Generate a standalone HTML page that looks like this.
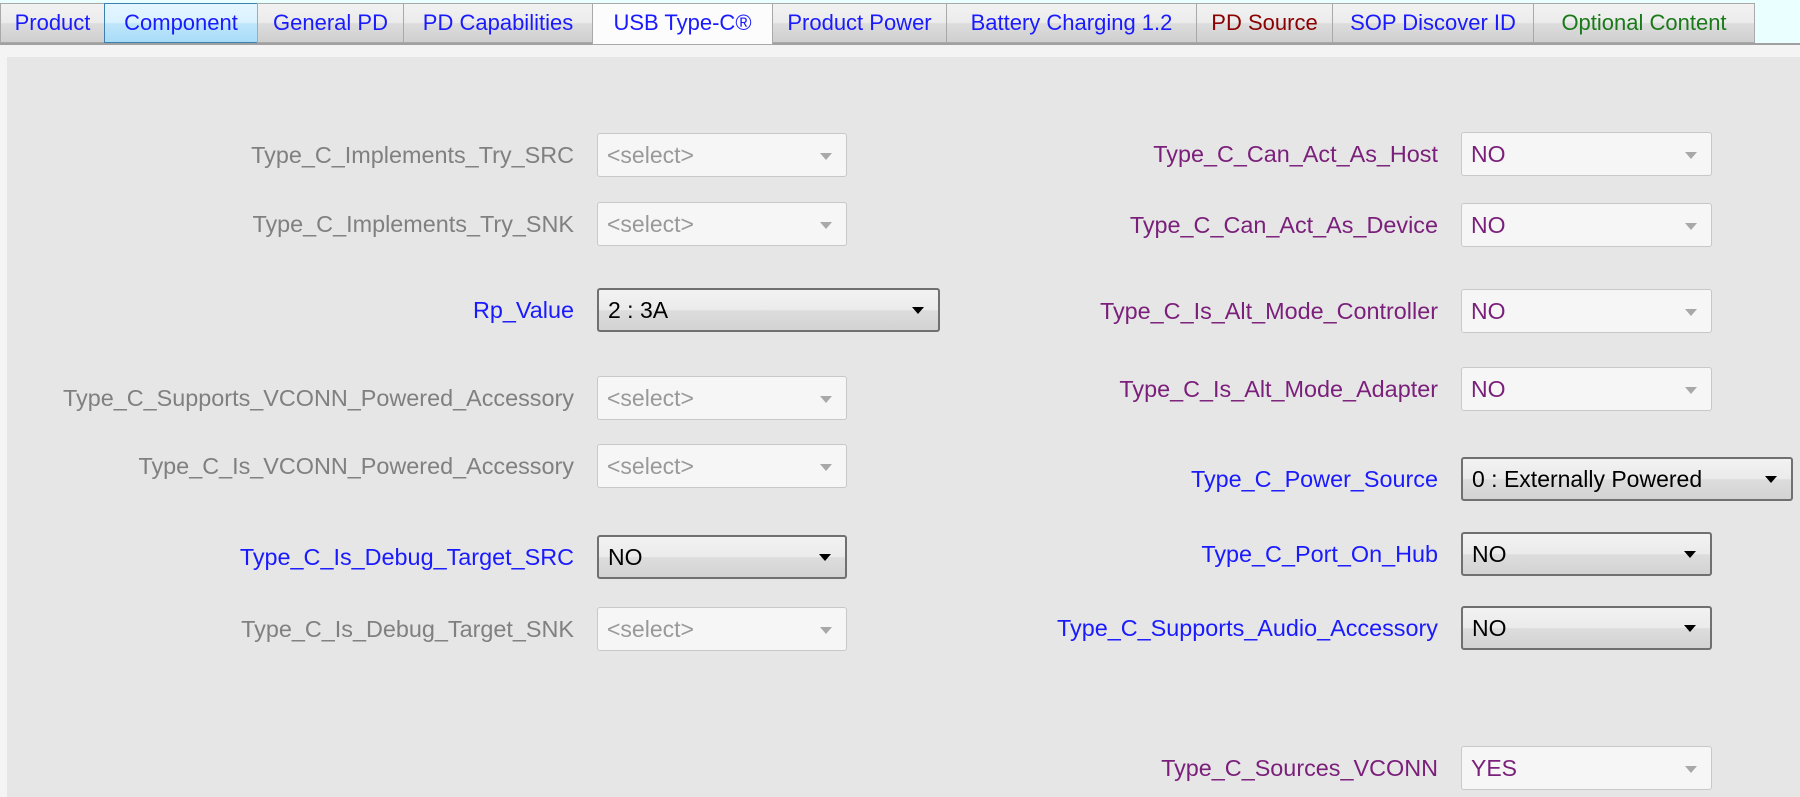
<!DOCTYPE html>
<html><head><style>
*{box-sizing:border-box;margin:0;padding:0}
body{width:1800px;height:797px;overflow:hidden;background:#f4f4f4;font-family:"Liberation Sans",sans-serif;position:relative}
.tabbar{position:absolute;left:0;top:0;width:1800px;height:45px;background:#eaffff;border-bottom:2px solid #a0a0a0}
.tab{position:absolute;top:3px;height:40px;border:1px solid #a9a9a9;background:linear-gradient(#f2f2f2,#ebebeb 50%,#dddddd 51%,#cfcfcf);font-size:22px;line-height:38px;text-align:center;white-space:nowrap;overflow:hidden}
.content{position:absolute;left:7px;top:57px;width:1793px;height:740px;background:#e6e6e6}
.lbl{position:absolute;font-size:23.4px;text-align:right;white-space:nowrap;line-height:44px;height:44px}
.sel{position:absolute;height:44px;border:1px solid #c8c8c8;border-radius:3px;background:#f6f6f6;font-size:23px;line-height:42px;padding-left:9px;color:#999}
.sel::after{content:"";position:absolute;right:14px;top:19px;border-left:6px solid transparent;border-right:6px solid transparent;border-top:7px solid #a8a8a8}
.sel.act{border:2px solid #707070;background:linear-gradient(#f2f2f2,#ebebeb 50%,#dddddd 51%,#d3d3d3);color:#000;line-height:40px}
.sel.act::after{border-top-color:#000;top:17px}
.g{color:#808080}.b{color:#1a1aff}.p{color:#7a1f7a}
</style></head><body>
<div class="tabbar">
<div class="tab" style="left:0;width:105px;color:#1a1aff">Product</div>
<div class="tab" style="left:104px;width:154px;color:#1a1aff;background:linear-gradient(#e4f6ff,#d9f1ff 50%,#bfe6fb 51%,#a8dcf8);border-color:#3c7fb1">Component</div>
<div class="tab" style="left:257px;width:147px;color:#1a1aff">General PD</div>
<div class="tab" style="left:403px;width:190px;color:#1a1aff">PD Capabilities</div>
<div class="tab" style="left:592px;width:181px;top:3px;height:42px;background:#fcfcfc;color:#1a1aff">USB Type-C®</div>
<div class="tab" style="left:772px;width:175px;color:#1a1aff">Product Power</div>
<div class="tab" style="left:946px;width:251px;color:#1a1aff">Battery Charging 1.2</div>
<div class="tab" style="left:1196px;width:137px;color:#8b0000">PD Source</div>
<div class="tab" style="left:1332px;width:202px;color:#1a1aff">SOP Discover ID</div>
<div class="tab" style="left:1533px;width:222px;color:#1a7a1a">Optional Content</div>
</div>
<div class="content"></div>

<div class="lbl g" style="right:1226px;top:133px">Type_C_Implements_Try_SRC</div>
<div class="sel" style="left:597px;top:133px;width:250px">&lt;select&gt;</div>
<div class="lbl g" style="right:1226px;top:202px">Type_C_Implements_Try_SNK</div>
<div class="sel" style="left:597px;top:202px;width:250px">&lt;select&gt;</div>
<div class="lbl b" style="right:1226px;top:288px">Rp_Value</div>
<div class="sel act" style="left:597px;top:288px;width:343px">2 : 3A</div>
<div class="lbl g" style="right:1226px;top:376px">Type_C_Supports_VCONN_Powered_Accessory</div>
<div class="sel" style="left:597px;top:376px;width:250px">&lt;select&gt;</div>
<div class="lbl g" style="right:1226px;top:444px">Type_C_Is_VCONN_Powered_Accessory</div>
<div class="sel" style="left:597px;top:444px;width:250px">&lt;select&gt;</div>
<div class="lbl b" style="right:1226px;top:535px">Type_C_Is_Debug_Target_SRC</div>
<div class="sel act" style="left:597px;top:535px;width:250px">NO</div>
<div class="lbl g" style="right:1226px;top:607px">Type_C_Is_Debug_Target_SNK</div>
<div class="sel" style="left:597px;top:607px;width:250px">&lt;select&gt;</div>

<div class="lbl p" style="right:362px;top:132px">Type_C_Can_Act_As_Host</div>
<div class="sel" style="left:1461px;top:132px;width:251px;color:#7a1f7a">NO</div>
<div class="lbl p" style="right:362px;top:203px">Type_C_Can_Act_As_Device</div>
<div class="sel" style="left:1461px;top:203px;width:251px;color:#7a1f7a">NO</div>
<div class="lbl p" style="right:362px;top:289px">Type_C_Is_Alt_Mode_Controller</div>
<div class="sel" style="left:1461px;top:289px;width:251px;color:#7a1f7a">NO</div>
<div class="lbl p" style="right:362px;top:367px">Type_C_Is_Alt_Mode_Adapter</div>
<div class="sel" style="left:1461px;top:367px;width:251px;color:#7a1f7a">NO</div>
<div class="lbl b" style="right:362px;top:457px">Type_C_Power_Source</div>
<div class="sel act" style="left:1461px;top:457px;width:332px">0 : Externally Powered</div>
<div class="lbl b" style="right:362px;top:532px">Type_C_Port_On_Hub</div>
<div class="sel act" style="left:1461px;top:532px;width:251px">NO</div>
<div class="lbl b" style="right:362px;top:606px">Type_C_Supports_Audio_Accessory</div>
<div class="sel act" style="left:1461px;top:606px;width:251px">NO</div>
<div class="lbl p" style="right:362px;top:746px">Type_C_Sources_VCONN</div>
<div class="sel" style="left:1461px;top:746px;width:251px;color:#7a1f7a">YES</div>
</body></html>
